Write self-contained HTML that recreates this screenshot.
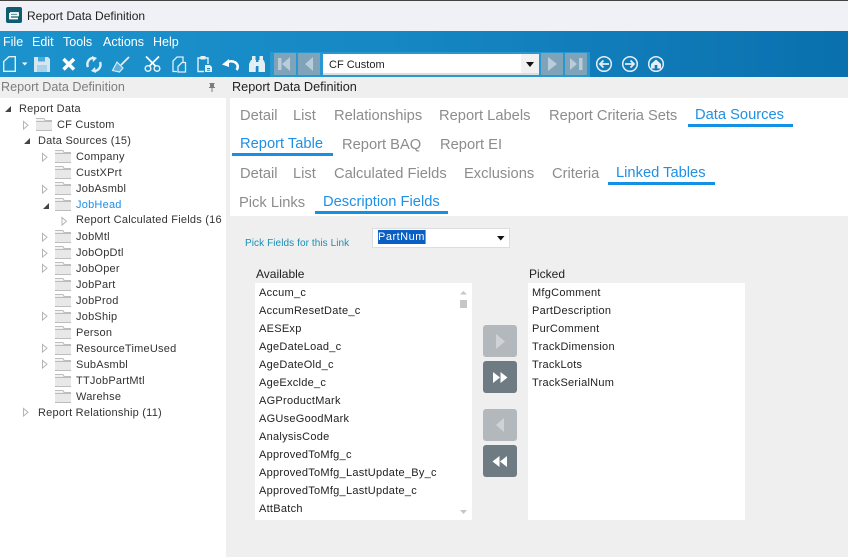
<!DOCTYPE html>
<html><head><meta charset="utf-8"><style>
html,body{margin:0;padding:0}
body{width:848px;height:557px;position:relative;overflow:hidden;background:#efefef;font-family:"Liberation Sans",sans-serif}
.a{position:absolute;white-space:nowrap}
.t{position:absolute;white-space:nowrap;font-size:11px;color:#333;letter-spacing:.23px;line-height:14px;margin-top:1px}
.tab{position:absolute;white-space:nowrap;font-size:14.7px;color:#8c8c8c;line-height:18px;margin-top:1px}
.on{color:#1e90e6}
.ul{position:absolute;height:3px;background:#1490e4}
.li{position:absolute;white-space:nowrap;font-size:11px;color:#222;letter-spacing:.27px;line-height:14px;margin-top:1px}
.m{position:absolute;top:35px;color:#fff;font-size:12.5px;line-height:14px}
svg{position:absolute;overflow:visible}
.btn{position:absolute;width:34px;height:32px;border-radius:3px}
</style></head><body>
<div class="a" style="left:0;top:0;width:848px;height:1px;background:#444"></div>
<div class="a" style="left:0;top:1px;width:848px;height:30px;background:#f0f1f7"></div>
<svg style="left:6px;top:7px" width="16" height="16"><rect width="16" height="16" rx="2" fill="#0d5c70"/><path d="M4 6h8v2.500H4.500M4 6v5.500h8" fill="none" stroke="#fff" stroke-width="1.800"/></svg>
<div class="a" style="left:27px;top:9px;font-size:12px;color:#222;line-height:14px">Report Data Definition</div>

<div class="a" style="left:0;top:31px;width:848px;height:46px;background:linear-gradient(90deg,#1c93cd,#1688c4 45%,#0a70ae)"></div>
<div class="m" style="left:3px">File</div><div class="m" style="left:32px">Edit</div><div class="m" style="left:63px">Tools</div><div class="m" style="left:103px">Actions</div><div class="m" style="left:153px">Help</div>

<svg style="left:0;top:48px" width="270" height="30" fill="none" stroke="#e4eff5" stroke-width="1.400">
<path d="M9 8.700h6.300v14.600H3.700V13.500z"/>
<path d="M22 14.500h5.500l-2.750 3z" fill="#fff" stroke="none"/>
<path d="M34 9h14l2 2v13H34z" fill="#d5e6f0" stroke="none"/><rect x="38" y="9" width="7" height="4.500" fill="#4fa8d5" stroke="none"/><rect x="37" y="17" width="10" height="7" fill="#a8d2e8" stroke="none"/>
<path d="M63.500 11l10.500 10.500M74 11L63.500 21.500" stroke="#fff" stroke-width="3.400"/>
<path d="M88 19a6.500 6.500 0 0 1 5-9.200M100 14a6.500 6.500 0 0 1-5 9" stroke-width="2.400"/><path d="M92 8l5 2-4 4zM96 25l-5-2 4-4z" fill="#e4eff5" stroke="none"/>
<path d="M129 9l-8 8" stroke-width="1.800"/><path d="M117 14l6 6-3.500 4-7-1.500z" fill="#5fb0da" stroke="#e4eff5" stroke-width="1.100"/>
<circle cx="148" cy="20.500" r="2.800" stroke-width="1.500"/><circle cx="157" cy="20.500" r="2.800" stroke-width="1.500"/><path d="M149.500 18L159 8.500M155.500 18L146 8.500" stroke="#fff" stroke-width="1.700"/>
<path d="M177 23.500h-4V13l4-4h6v5" stroke-width="1.300"/><path d="M178 18.500l4-4h3.500v9.500H178z" stroke-width="1.300"/>
<path d="M204 23.500h-6V10h3M205 10h3v6" stroke-width="1.400"/><rect x="200.500" y="8" width="5" height="3.500" fill="#e4eff5" stroke="none"/><path d="M205 17h5l2 2v5h-7z" fill="#e4eff5" stroke="none"/><path d="M207 20.500h3M207 22.300h3" stroke="#1688c4" stroke-width="1"/>
<path d="M226 15.500a6.500 5.500 0 0 1 10.500 6.500" stroke="#fff" stroke-width="2.500"/><path d="M222 16.500l7-5.500v8z" fill="#fff" stroke="none"/>
<path d="M250 14l1-2h5v12h-7v-8zM258.500 12h5l1 2 .5 2v8h-6.500zM252 8h3.500v4H252zM259.500 8h3.500v4h-3.500zM256 14h3v4h-3z" fill="#e4eff5" stroke="none"/><path d="M256.500 19v5" stroke="#1688c4" stroke-width="1.500"/>
</svg>

<div class="a" style="left:270px;top:52px;width:320px;height:25px;background:#2a98d0"></div>
<div class="btn" style="left:274px;top:53px;width:22px;height:22px;background:#7fa3b8;border-radius:1px"></div>
<div class="btn" style="left:298px;top:53px;width:22px;height:22px;background:#7fa3b8;border-radius:1px"></div>
<div class="btn" style="left:541px;top:53px;width:22px;height:22px;background:#7fa3b8;border-radius:1px"></div>
<div class="btn" style="left:565px;top:53px;width:22px;height:22px;background:#7fa3b8;border-radius:1px"></div>
<svg style="left:274px;top:53px" width="320" height="22" fill="#b9ccd7"><path d="M4 5h3.500v12H4zM16 4v14l-8-7zM39 4v14l-8-7zM274 4l9 7-9 7zM296 5l7 6-7 6zM305 5h3.500v12H305z"/></svg>
<div class="a" style="left:323px;top:54px;width:216px;height:21px;background:#fff;border-bottom:2px solid #ddd;box-sizing:border-box"></div>
<div class="a" style="left:521px;top:54px;width:18px;height:19px;background:#f1f1f1"></div>
<svg style="left:526px;top:62px" width="9" height="6"><path d="M0 0h8L4 5z" fill="#111"/></svg>
<div class="a" style="left:329px;top:58px;font-size:11px;color:#222;line-height:14px">CF Custom</div>
<svg style="left:596px;top:55px" width="72" height="18" fill="none" stroke="#e4eef5" stroke-width="1.500">
<circle cx="8" cy="9" r="7.300"/><path d="M13 9H4M7.500 5.500L4 9l3.500 3.500" stroke-width="1.800"/>
<circle cx="34" cy="9" r="7.300"/><path d="M29 9h9M34.500 5.500L38 9l-3.500 3.500" stroke-width="1.800"/>
<circle cx="60" cy="9" r="7.300"/><path d="M55 9L60 4.500 65 9v4.500H55z" fill="#e4eef5" stroke="none"/><rect x="58.700" y="10" width="2.600" height="3.500" fill="#1278b4" stroke="none"/>
</svg>

<div class="a" style="left:0;top:77px;width:848px;height:21px;background:#efefef"></div>
<div class="a" style="left:1px;top:80px;font-size:12.600px;color:#7d7d7d;line-height:15px">Report Data Definition</div>
<svg style="left:208px;top:83px" width="8" height="9" fill="#7d7d7d"><path d="M1.500 0h5v1H6v3h1v1H1V4h1V1h-.5zM3.500 5h1v4h-1z"/></svg>
<div class="a" style="left:232px;top:80px;font-size:12.700px;color:#222;line-height:15px">Report Data Definition</div>

<div class="a" style="left:0;top:98px;width:226px;height:459px;background:#fff"></div>
<div class="a" style="left:230px;top:98px;width:618px;height:118px;background:#fff"></div>

<svg style="left:0;top:98px" width="226" height="330">
<defs>
<g id="f"><path d="M0 2.500h16v10H0z" fill="#e8e8e8"/><path d="M0 .5h8l1 2H16M0 3.500h16M0 12.500h16" fill="none" stroke="#bdbdbd"/><path d="M0 1h8v1.500H0z" fill="#f3f3f3"/></g>
<path id="c" d="M.5 .5v7.500l4.500-3.750z" fill="#fff" stroke="#b5b5b5"/>
</defs>
<g fill="#444"><path d="M11 8v6H5zM30 40v6h-6zM49 105v6h-6z"/></g>
<use href="#c" x="23" y="23"/><use href="#c" x="42" y="55"/><use href="#c" x="42" y="87"/><use href="#c" x="61.500" y="119"/>
<use href="#c" x="42" y="135"/><use href="#c" x="42" y="151"/><use href="#c" x="42" y="166"/><use href="#c" x="42" y="214"/><use href="#c" x="42" y="246"/><use href="#c" x="42" y="262"/><use href="#c" x="23" y="310"/>
<use href="#f" x="36" y="20"/>
<use href="#f" x="55" y="52"/><use href="#f" x="55" y="68"/><use href="#f" x="55" y="84"/><use href="#f" x="55" y="100"/>
<use href="#f" x="55" y="132"/><use href="#f" x="55" y="148"/><use href="#f" x="55" y="164"/><use href="#f" x="55" y="180"/><use href="#f" x="55" y="196"/><use href="#f" x="55" y="212"/><use href="#f" x="55" y="228"/><use href="#f" x="55" y="244"/><use href="#f" x="55" y="260"/><use href="#f" x="55" y="276"/><use href="#f" x="55" y="292"/>
</svg>
<div class="t" style="left:19px;top:101px">Report Data</div>
<div class="t" style="left:57px;top:117px">CF Custom</div>
<div class="t" style="left:38px;top:133px">Data Sources (15)</div>
<div class="t" style="left:76px;top:149px">Company</div>
<div class="t" style="left:76px;top:165px">CustXPrt</div>
<div class="t" style="left:76px;top:181px">JobAsmbl</div>
<div class="t" style="left:76px;top:197px;color:#1e90e6">JobHead</div>
<div class="t" style="left:76px;top:212px;width:148px;overflow:hidden">Report Calculated Fields (16</div>
<div class="t" style="left:76px;top:229px">JobMtl</div>
<div class="t" style="left:76px;top:245px">JobOpDtl</div>
<div class="t" style="left:76px;top:261px">JobOper</div>
<div class="t" style="left:76px;top:277px">JobPart</div>
<div class="t" style="left:76px;top:293px">JobProd</div>
<div class="t" style="left:76px;top:309px">JobShip</div>
<div class="t" style="left:76px;top:325px">Person</div>
<div class="t" style="left:76px;top:341px">ResourceTimeUsed</div>
<div class="t" style="left:76px;top:357px">SubAsmbl</div>
<div class="t" style="left:76px;top:373px">TTJobPartMtl</div>
<div class="t" style="left:76px;top:389px">Warehse</div>
<div class="t" style="left:38px;top:405px">Report Relationship (11)</div>

<div class="tab" style="left:240px;top:106px">Detail</div>
<div class="tab" style="left:293px;top:106px">List</div>
<div class="tab" style="left:334px;top:106px">Relationships</div>
<div class="tab" style="left:439px;top:106px">Report Labels</div>
<div class="tab" style="left:549px;top:106px;letter-spacing:-.04px">Report Criteria Sets</div>
<div class="tab on" style="left:695px;top:105px">Data Sources</div>
<div class="ul" style="left:688px;top:124px;width:105px"></div>
<div class="tab on" style="left:240px;top:134px">Report Table</div>
<div class="ul" style="left:232px;top:153px;width:101px"></div>
<div class="tab" style="left:342px;top:135px">Report BAQ</div>
<div class="tab" style="left:440px;top:135px">Report EI</div>
<div class="tab" style="left:240px;top:164px">Detail</div>
<div class="tab" style="left:293px;top:164px">List</div>
<div class="tab" style="left:334px;top:164px">Calculated Fields</div>
<div class="tab" style="left:464px;top:164px">Exclusions</div>
<div class="tab" style="left:552px;top:164px">Criteria</div>
<div class="tab on" style="left:616px;top:163px">Linked Tables</div>
<div class="ul" style="left:608px;top:182px;width:107px"></div>
<div class="tab" style="left:239px;top:193px">Pick Links</div>
<div class="tab on" style="left:323px;top:192px">Description Fields</div>
<div class="ul" style="left:315px;top:211px;width:133px"></div>

<div class="a" style="left:245px;top:237px;font-size:10px;color:#1a8fb5;letter-spacing:.08px;line-height:13px">Pick Fields for this Link</div>
<div class="a" style="left:372px;top:228px;width:138px;height:20px;background:#fff;border:1px solid #ddd;box-sizing:border-box"></div>
<div class="a" style="left:378px;top:230px;height:14px;background:#0a5fc4;color:#fff;font-size:11px;letter-spacing:.5px;line-height:15px;border-right:1px solid #f08030">PartNum</div>
<svg style="left:497px;top:236px" width="9" height="6"><path d="M0 0h7.500L3.750 4.500z" fill="#111"/></svg>

<div class="a" style="left:256px;top:267px;font-size:12px;color:#222;line-height:14px">Available</div>
<div class="a" style="left:529px;top:267px;font-size:12px;color:#222;line-height:14px">Picked</div>
<div class="a" style="left:255px;top:283px;width:217px;height:237px;background:#fff"></div>
<div class="a" style="left:528px;top:283px;width:217px;height:237px;background:#fff"></div>
<svg style="left:459px;top:288px" width="10" height="226" fill="#c6c6c6"><path d="M1 6.500L4.500 3 8 6.500zM1 222h7l-3.500 4z"/><rect x="1" y="12" width="7" height="8"/></svg>

<div class="li" style="left:259px;top:285px">Accum_c</div>
<div class="li" style="left:259px;top:303px">AccumResetDate_c</div>
<div class="li" style="left:259px;top:321px">AESExp</div>
<div class="li" style="left:259px;top:339px">AgeDateLoad_c</div>
<div class="li" style="left:259px;top:357px">AgeDateOld_c</div>
<div class="li" style="left:259px;top:375px">AgeExclde_c</div>
<div class="li" style="left:259px;top:393px">AGProductMark</div>
<div class="li" style="left:259px;top:411px">AGUseGoodMark</div>
<div class="li" style="left:259px;top:429px">AnalysisCode</div>
<div class="li" style="left:259px;top:447px">ApprovedToMfg_c</div>
<div class="li" style="left:259px;top:465px">ApprovedToMfg_LastUpdate_By_c</div>
<div class="li" style="left:259px;top:483px">ApprovedToMfg_LastUpdate_c</div>
<div class="li" style="left:259px;top:501px">AttBatch</div>

<div class="li" style="left:532px;top:285px">MfgComment</div>
<div class="li" style="left:532px;top:303px">PartDescription</div>
<div class="li" style="left:532px;top:321px">PurComment</div>
<div class="li" style="left:532px;top:339px">TrackDimension</div>
<div class="li" style="left:532px;top:357px">TrackLots</div>
<div class="li" style="left:532px;top:375px">TrackSerialNum</div>

<div class="btn" style="left:483px;top:325px;background:#b3b8bc"></div>
<div class="btn" style="left:483px;top:361px;background:#6e7b83"></div>
<div class="btn" style="left:483px;top:409px;background:#b3b8bc"></div>
<div class="btn" style="left:483px;top:445px;background:#6e7b83"></div>
<svg style="left:483px;top:325px" width="34" height="152">
<path d="M13 9l9 7.500-9 7.500z" fill="#cfd3d6"/>
<path d="M10 47l7 5.500-7 5.500zM17.500 47l7 5.500-7 5.500z" fill="#fff"/>
<path d="M21 93l-8 7 8 7z" fill="#cfd3d6"/>
<path d="M16.500 131l-7 5.500 7 5.500zM24 131l-7 5.500 7 5.500z" fill="#fff"/>
</svg>
</body></html>
